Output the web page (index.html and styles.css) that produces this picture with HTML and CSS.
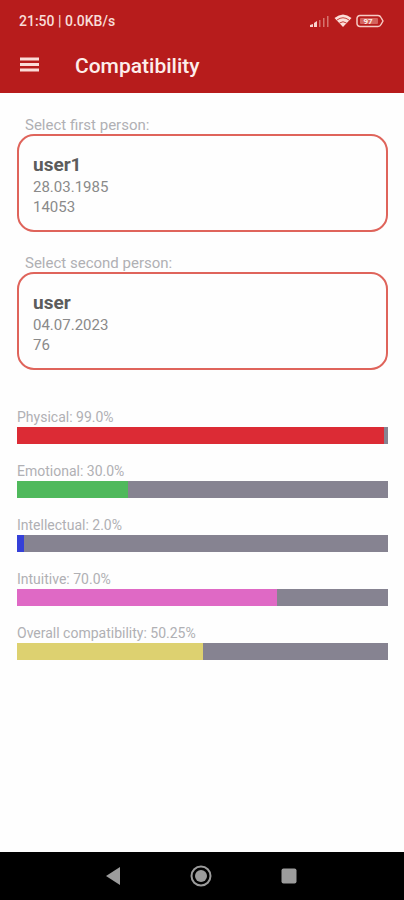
FILE: index.html
```html
<!DOCTYPE html>
<html lang="en">
<head>
<meta charset="utf-8">
<meta name="viewport" content="width=device-width, initial-scale=1">
<title>Compatibility</title>
<link rel="stylesheet" href="styles.css">
</head>
<body>
<header class="header">
  <div class="status">
    <span>21:50 | 0.0KB/s</span>
    <div class="status-icons">
      <svg width="20" height="14" viewBox="0 0 20 14" aria-hidden="true">
        <path d="M0 13v-2l3-1v3zM4 13V9l3-2v6z" fill="#f8d4ce"/>
        <path d="M9 6h1.500v7H9zM13 4h1.500v9H13zM17 2h1.500v11H17z" fill="#d5746e"/>
      </svg>
      <svg width="18" height="14" viewBox="0 0 18 14" aria-hidden="true">
        <path d="M9 13 0.500 4Q9-3 17.500 4z" fill="#fbded8"/>
        <path d="M3 6Q9 1.500 15 6M5.500 9Q9 6.500 12.500 9" fill="none" stroke="#c8403b" stroke-width="1"/>
      </svg>
      <svg width="28" height="14" viewBox="0 0 28 14" aria-hidden="true">
        <path d="M4 1.500h18q2 0 3 2l2 3.500-2 3.500q-1 2-3 2H4a3 3 0 0 1-3-3v-5a3 3 0 0 1 3-3z" fill="none" stroke="#f6cbc4" stroke-width="1.500" stroke-linejoin="round"/>
        <rect x="4" y="4" width="18" height="6" rx="1" fill="#d4635d"/>
        <text x="12" y="10" class="battery-text">97</text>
      </svg>
    </div>
  </div>
  <div class="toolbar">
    <button class="menu" type="button" aria-label="Menu">
      <svg width="20" height="18" viewBox="0 0 20 18"><path d="M0 2h19M0 7.500h19M0 13h19" stroke="#fbdcd8" stroke-width="3"/></svg>
    </button>
    <h1>Compatibility</h1>
  </div>
</header>
<main>
  <section class="person">
    <h2 id="first">Select first person:</h2>
    <button class="card" type="button" aria-describedby="first">
      <strong>user1</strong><span>28.03.1985</span><span>14053</span>
    </button>
  </section>
  <section class="person">
    <h2 id="second">Select second person:</h2>
    <button class="card" type="button" aria-describedby="second">
      <strong>user</strong><span>04.07.2023</span><span>76</span>
    </button>
  </section>
  <section class="metrics">
    <div class="metric physical"><label for="physical">Physical: 99.0%</label><progress id="physical" max="100" value="99"></progress></div>
    <div class="metric emotional"><label for="emotional">Emotional: 30.0%</label><progress id="emotional" max="100" value="30"></progress></div>
    <div class="metric intellectual"><label for="intellectual">Intellectual: 2.0%</label><progress id="intellectual" max="100" value="2"></progress></div>
    <div class="metric intuitive"><label for="intuitive">Intuitive: 70.0%</label><progress id="intuitive" max="100" value="70"></progress></div>
    <div class="metric overall"><label for="overall">Overall compatibility: 50.25%</label><progress id="overall" max="100" value="50.25"></progress></div>
  </section>
</main>
<nav class="navbar" aria-label="System">
  <button type="button" aria-label="Back"><svg width="22" height="22" viewBox="0 0 22 22"><path d="M4 11 18 2v18z" fill="#9c9c9c"/></svg></button>
  <button type="button" aria-label="Home"><svg width="22" height="22" viewBox="0 0 22 22"><circle cx="11" cy="11" r="9.500" fill="none" stroke="#9c9c9c" stroke-width="2"/><circle cx="11" cy="11" r="6" fill="#9c9c9c"/></svg></button>
  <button type="button" aria-label="Recents"><svg width="22" height="22" viewBox="0 0 22 22"><rect x="3.500" y="3.500" width="15" height="15" rx="2" fill="#9c9c9c"/></svg></button>
</nav>
</body>
</html>
```
FILE: styles.css
```css
* {
  box-sizing: border-box;
}

body {
  margin: 0;
  min-height: 100vh;
  display: flex;
  flex-direction: column;
  background: #fefefe;
  font-family: Roboto, "Liberation Sans", sans-serif;
}

button {
  border: 0;
  padding: 0;
  background: none;
  font-family: inherit;
}

svg {
  display: block;
}

h1,
h2 {
  margin: 0;
}

.header {
  background: #b71c1c;
  color: #fdeeeb;
}

.status {
  display: flex;
  align-items: center;
  justify-content: space-between;
  padding: 12px 20px 8px 19px;
  font-size: 14px;
  line-height: 18px;
  font-weight: 500;
  color: #f8dcd8;
}

.status-icons {
  display: flex;
  gap: 4px;
}

.battery-text {
  fill: #fff0ec;
  font-size: 8px;
  font-weight: 700;
  text-anchor: middle;
}

.toolbar {
  display: flex;
  align-items: center;
  gap: 35px;
  height: 55px;
  padding: 0 20px;
}

.toolbar h1 {
  font-size: 21px;
  line-height: 28px;
  font-weight: 500;
}

main {
  flex: 1;
  padding: 23px 16px 24px 17px;
}

.person {
  margin-bottom: 22px;
}

.person h2 {
  padding-left: 8px;
  font-size: 15px;
  line-height: 18px;
  font-weight: 400;
  color: #b0b0b4;
}

.card {
  display: flex;
  flex-direction: column;
  width: 100%;
  padding: 16px 14px 13px;
  border: 2px solid #df645b;
  border-radius: 17px;
  color: #8a8a8a;
  font-size: 15px;
  line-height: 20px;
  text-align: left;
}

.card strong {
  color: #5c5c5c;
  font-size: 19px;
  line-height: 25px;
  font-weight: 700;
}

.metrics {
  display: grid;
  gap: 17px;
  padding-top: 15px;
}

.metric {
  display: grid;
}

.metric label {
  font-size: 14px;
  line-height: 20px;
  color: #b0b0b4;
}

progress {
  appearance: none;
  display: block;
  width: 100%;
  height: 17px;
  border: 0;
  background: #868391;
}

progress::-webkit-progress-bar {
  background: #868391;
}

progress::-webkit-progress-value {
  background: var(--fill);
}

.physical {
  --fill: #dc2b35;
}

.emotional {
  --fill: #4fb95c;
}

.intellectual {
  --fill: #3540d8;
}

.intuitive {
  --fill: #df69c5;
}

.overall {
  --fill: #ddd170;
}

.navbar {
  display: flex;
  justify-content: center;
  gap: 66px;
  padding: 13px 2px 13px 0;
  background: #000;
}
```
